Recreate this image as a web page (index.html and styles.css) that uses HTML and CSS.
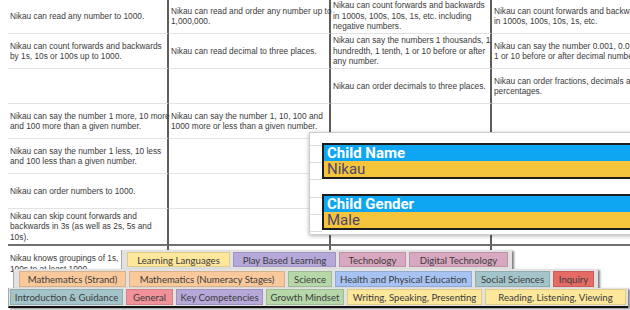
FILE: index.html
```html
<!DOCTYPE html>
<html lang="en">
<head>
<meta charset="utf-8">
<title>Nikau report</title>
<link rel="stylesheet" href="styles.css">
</head>
<body>
<div class="sheet">
  <div class="cell">Nikau can read any number to 1000.</div>
  <div class="cell">Nikau can read and order any number up to<br>1,000,000.</div>
  <div class="cell">Nikau can count forwards and backwards<br>in 1000s, 100s, 10s, 1s, etc. including<br>negative numbers.</div>
  <div class="cell last">Nikau can count forwards and backwards<br>in 1000s, 100s, 10s, 1s, etc.</div>

  <div class="cell">Nikau can count forwards and backwards<br>by 1s, 10s or 100s up to 1000.</div>
  <div class="cell">Nikau can read decimal to three places.</div>
  <div class="cell">Nikau can say the numbers 1 thousands, 1<br>hundredth, 1 tenth, 1 or 10 before or after<br>any number.</div>
  <div class="cell last">Nikau can say the number 0.001, 0.01, 0.1,<br>1 or 10 before or after decimal numbers.</div>

  <div class="cell"></div>
  <div class="cell"></div>
  <div class="cell">Nikau can order decimals to three places.</div>
  <div class="cell last">Nikau can order fractions, decimals and<br>percentages.</div>

  <div class="cell">Nikau can say the number 1 more, 10 more<br>and 100 more than a given number.</div>
  <div class="cell">Nikau can say the number 1, 10, 100 and<br>1000 more or less than a given number.</div>
  <div class="cell"></div>
  <div class="cell last"></div>

  <div class="cell">Nikau can say the number 1 less, 10 less<br>and 100 less than a given number.</div>
  <div class="cell"></div>
  <div class="cell"></div>
  <div class="cell last"></div>

  <div class="cell">Nikau can order numbers to 1000.</div>
  <div class="cell"></div>
  <div class="cell"></div>
  <div class="cell last"></div>

  <div class="cell end">Nikau can skip count forwards and<br>backwards in 3s (as well as 2s, 5s and<br>10s).</div>
  <div class="cell end"></div>
  <div class="cell end"></div>
  <div class="cell end last"></div>

  <div class="cell open">Nikau knows groupings of 1s, 10s,<br>100s to at least 1000</div>
  <div class="cell open"></div>
  <div class="cell open"></div>
  <div class="cell open last"></div>
</div>

<div class="panel">
  <div class="gutter"></div>
  <div class="fields">
    <div class="field">
      <div class="label">Child Name</div>
      <div class="value">Nikau</div>
    </div>
    <div class="field">
      <div class="label">Child Gender</div>
      <div class="value">Male</div>
    </div>
  </div>
</div>

<div class="tabstack">
  <div class="bar bar-a">
    <span class="tab yellow">Learning Languages</span>
    <span class="tab purple">Play Based Learning</span>
    <span class="tab pink">Technology</span>
    <span class="tab pink">Digital Technology</span>
  </div>
  <div class="bar bar-b">
    <span class="tab orange">Mathematics (Strand)</span>
    <span class="tab orange">Mathematics (Numeracy Stages)</span>
    <span class="tab green">Science</span>
    <span class="tab blue">Health and Physical Education</span>
    <span class="tab teal">Social Sciences</span>
    <span class="tab red">Inquiry</span>
  </div>
  <div class="bar bar-c">
    <span class="tab teal">Introduction &amp; Guidance</span>
    <span class="tab rose">General</span>
    <span class="tab purple">Key Competencies</span>
    <span class="tab green">Growth Mindset</span>
    <span class="tab yellow">Writing, Speaking, Presenting</span>
    <span class="tab yellow">Reading, Listening, Viewing</span>
  </div>
</div>
</body>
</html>
```

FILE: styles.css
```css
* { box-sizing: border-box; }

html, body {
  margin: 0;
  padding: 0;
}

body {
  width: 630px;
  height: 310px;
  overflow: hidden;
  background: #ffffff;
  position: relative;
  font-family: "Liberation Sans", Arial, sans-serif;
}

/* ---------- spreadsheet grid ---------- */
.sheet {
  margin: -1px 0 0 8px;
  display: grid;
  grid-template-columns: 161px 162px 161px 160px;
  font-size: 8.3px;
  line-height: 10.5px;
  color: #3a3a3a;
}

.cell {
  height: 35px;
  padding: 0 2px;
  display: flex;
  align-items: center;
  white-space: nowrap;
  overflow: visible;
  border-bottom: 1px solid #e2e2e2;
  border-right: 2px solid #5e5e5e;
}

.cell.last { border-right: none; }

.cell.end {
  height: 37px;
  border-bottom: 2px solid #707070;
}

.cell.open { border-bottom: none; }

/* ---------- floating panel ---------- */
.panel {
  position: absolute;
  left: 309px;
  top: 132px;
  width: 340px;
  height: 103px;
  background: #ffffff;
  border: 1px solid #cdcdcd;
  box-shadow: 0 1px 4px rgba(0, 0, 0, 0.3);
  display: flex;
}

.gutter {
  width: 12px;
  flex: none;
  background: repeating-linear-gradient(to bottom,
    transparent 0, transparent 12px,
    #dcdcdc 12px, #dcdcdc 13px,
    transparent 13px, transparent 17.2px);
}

.fields {
  flex: 1;
  padding-top: 10px;
  display: flex;
  flex-direction: column;
  gap: 15px;
}

.field {
  border: 2px solid #1d1d1d;
  border-right: none;
  font-family: Roboto, "Liberation Sans", sans-serif;
  font-size: 15px;
  line-height: 16px;
}

.label {
  height: 16px;
  background: #0ea6f3;
  color: #ffffff;
  font-weight: 700;
  padding-left: 3px;
}

.value {
  height: 16px;
  background: #f4c43a;
  color: #4d4470;
  padding-left: 3px;
}

/* ---------- tab bars ---------- */
.tabstack {
  position: absolute;
  left: 0;
  top: 250px;
  display: flex;
  flex-direction: column;
  align-items: flex-start;
}

.bar {
  display: grid;
  gap: 3px;
  background: #e2e2e2;
  border-left: 1px solid #a8a8a8;
  box-shadow: 2px 1px 2px rgba(0, 0, 0, 0.5);
  font-family: Lato, "Liberation Sans", sans-serif;
  font-size: 9.6px;
  color: #3b3b3b;
}

.bar-a {
  margin-left: 121px;
  padding: 2px 4px 2px 5px;
  grid-template-columns: 103px 103px 67px 99px;
}

.bar-b {
  margin-left: 13px;
  padding: 2px 4px 1px 5px;
  grid-template-columns: 107px 156px 44px 137px 75px 41px;
}

.bar-c {
  margin-left: 8px;
  padding: 1px 2px 1px 1px;
  grid-template-columns: 113px 47px 87px 78px 135px 141px;
  border-bottom: 2px solid #111111;
}

.tab {
  height: 15px;
  line-height: 15px;
  text-align: center;
  white-space: nowrap;
  overflow: hidden;
  border: 1px solid rgba(0, 0, 0, 0.12);
}

.bar-b .tab,
.bar-c .tab {
  height: 16px;
  line-height: 15px;
}

.yellow { background: #fde79b; }
.purple { background: #b6a8d8; }
.pink   { background: #d8a7c0; }
.orange { background: #f9c99c; }
.green  { background: #b6d8a9; }
.blue   { background: #a6c3f3; }
.teal   { background: #a3c5ca; }
.red    { background: #e66a66; }
.rose   { background: #f1929a; }
```
